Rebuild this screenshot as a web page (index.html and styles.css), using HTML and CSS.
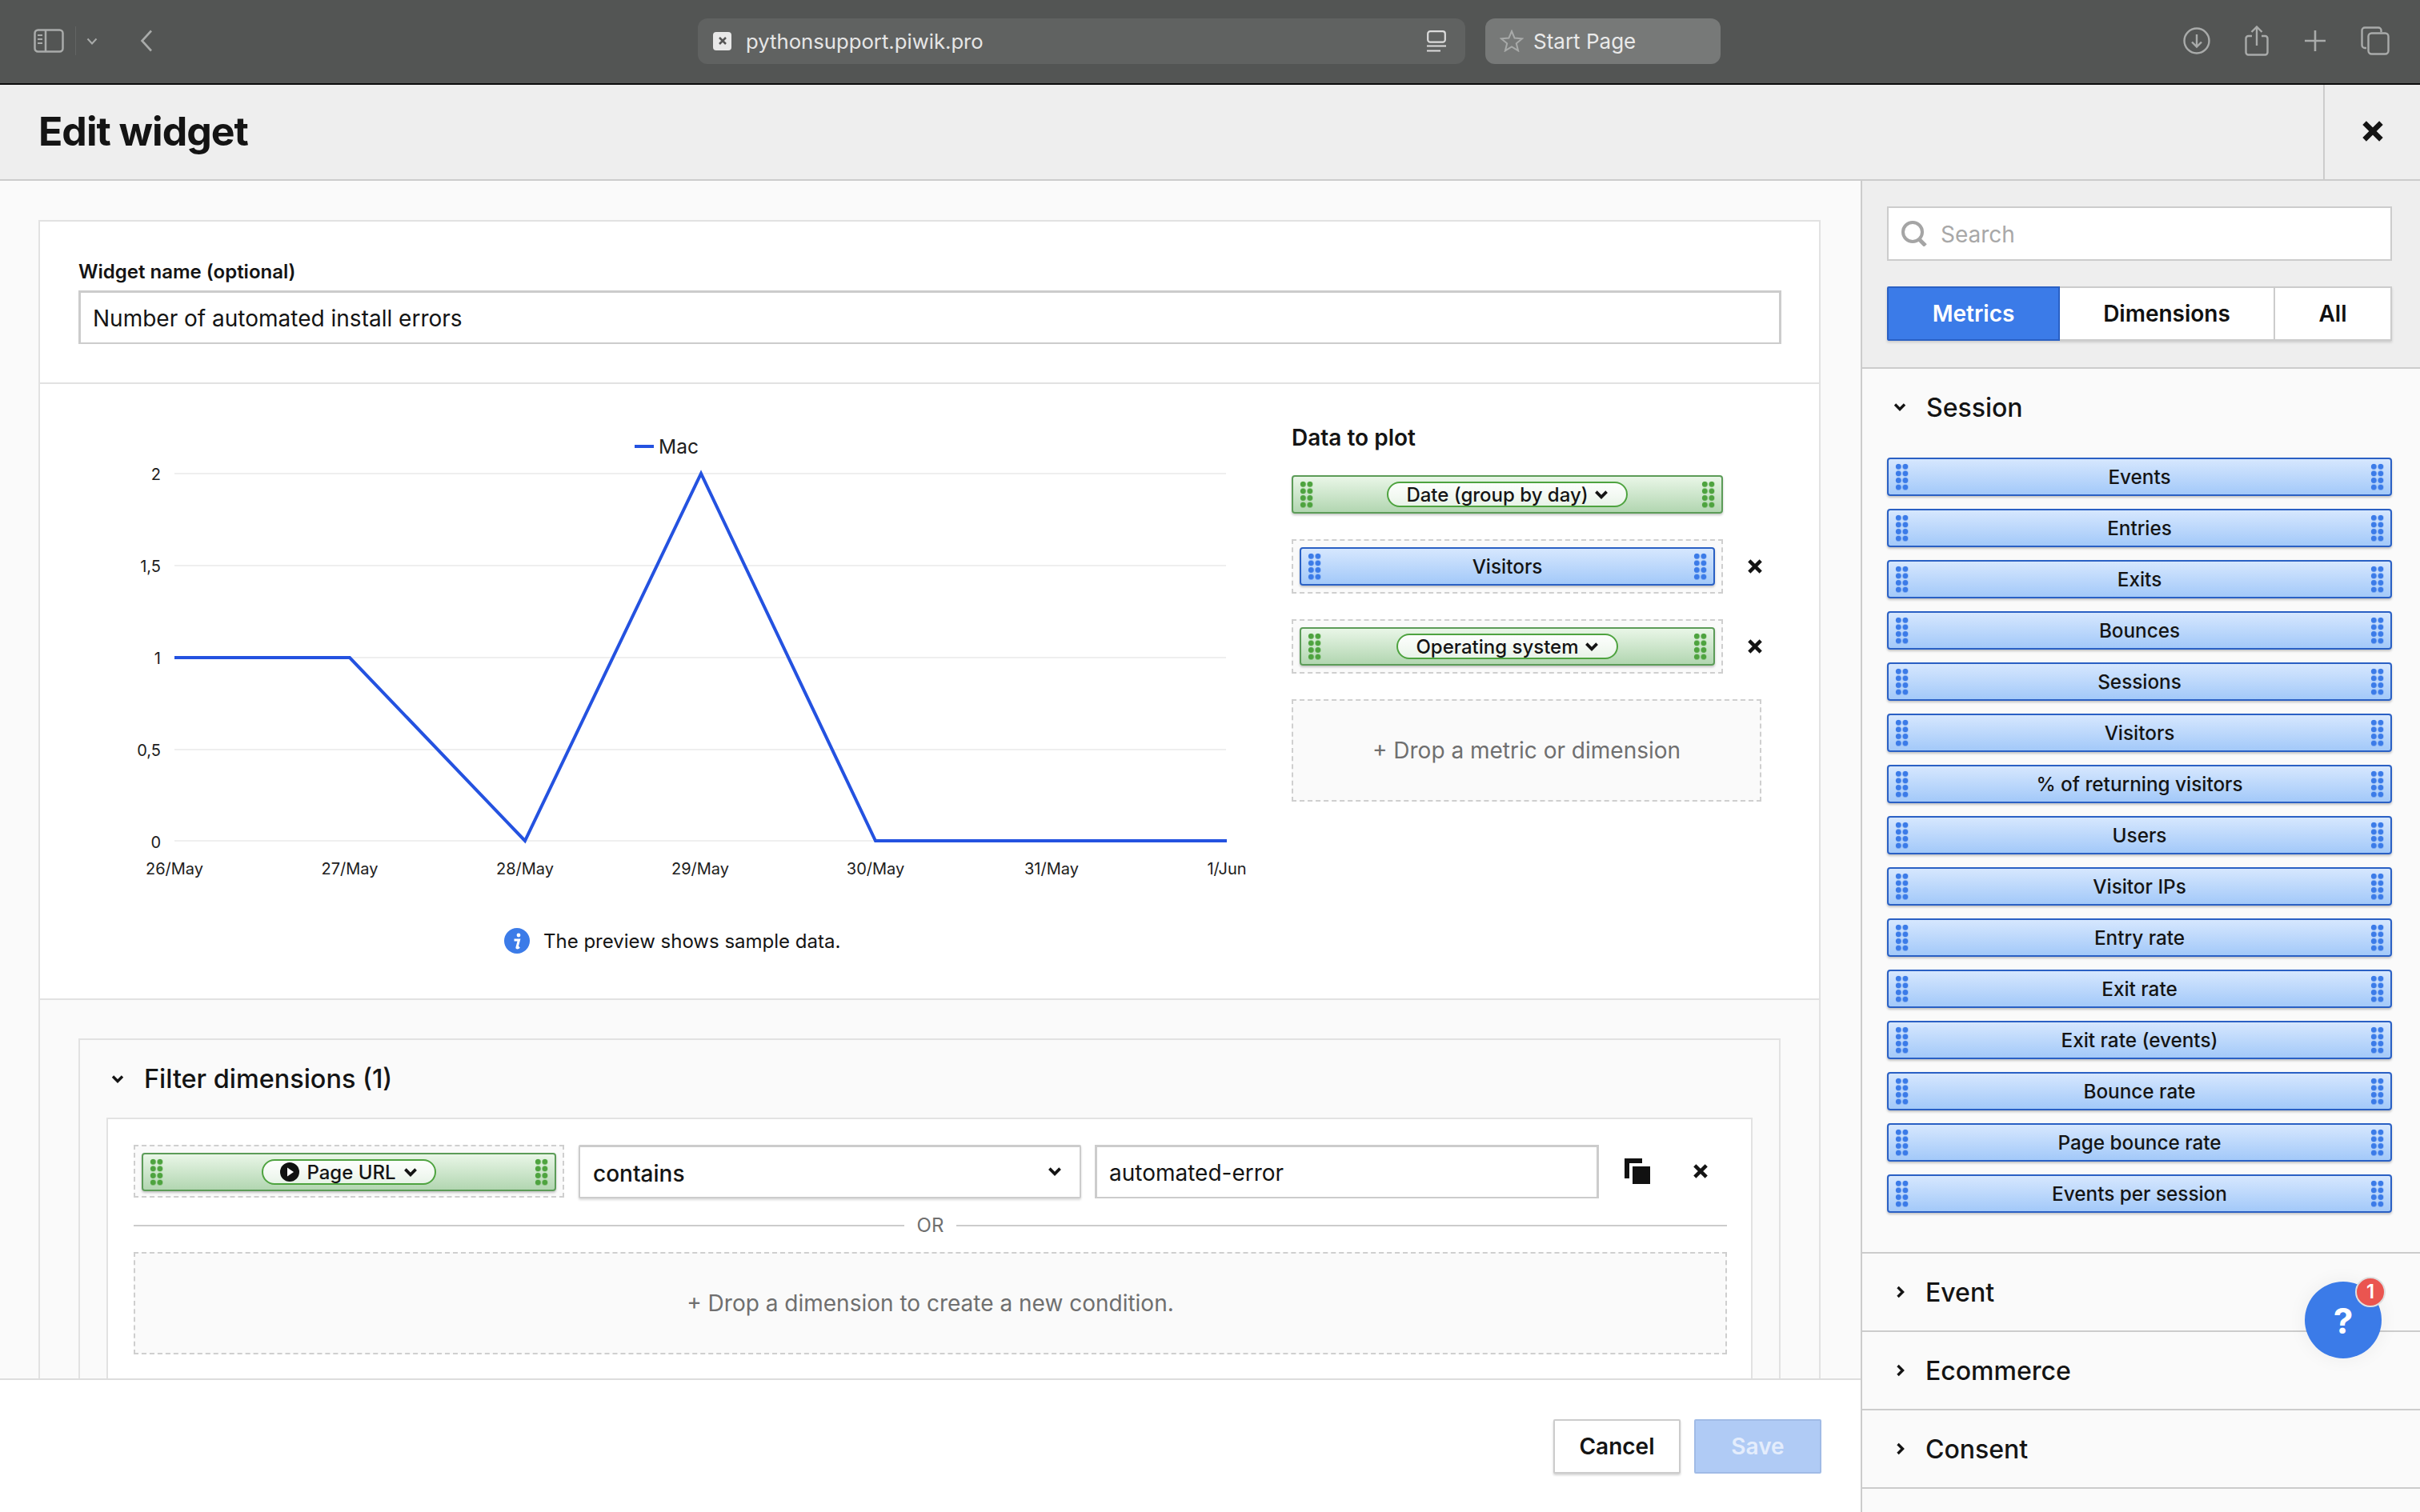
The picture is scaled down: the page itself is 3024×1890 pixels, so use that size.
FILE: index.html
```html
<!DOCTYPE html>
<html lang="en">
<head>
<meta charset="UTF-8">
<title>Edit widget</title>
<link rel="stylesheet" href="styles.css">
</head>
<body>
<svg class="defs" width="0" height="0">
  <symbol id="i-x" viewBox="0 0 20 20"><path d="M2 2 18 18M18 2 2 18" fill="none" stroke="currentColor" stroke-width="5"/></symbol>
  <symbol id="i-down" viewBox="0 0 16 10"><path d="M2 1.500 8 7.500 14 1.500" fill="none" stroke="currentColor" stroke-width="3.400"/></symbol>
  <symbol id="i-right" viewBox="0 0 10 16"><path d="M1.500 2 7.500 8 1.500 14" fill="none" stroke="currentColor" stroke-width="3.400"/></symbol>
</svg>

<div class="browser-bar">
  <svg class="tb-sidebar" width="38" height="30" viewBox="0 0 38 30" fill="none" stroke="#a9abaa" stroke-width="2.5">
    <rect x="1.5" y="1.5" width="35" height="27" rx="4"/><path d="M15 1.5v27"/>
    <path d="M5 8h6M5 13h6M5 18h6" stroke-width="2"/>
  </svg>
  <span class="tb-divider"></span>
  <svg class="tb-small-chevron" width="14" height="9" viewBox="0 0 14 9" fill="none" stroke="#a9abaa" stroke-width="2"><path d="M1.5 1.5 7 7.5 12.5 1.5"/></svg>
  <svg class="tb-back" width="16" height="28" viewBox="0 0 16 28" fill="none" stroke="#a9abaa" stroke-width="2.6"><path d="M14 1.5 2.5 14 14 26.5"/></svg>

  <div class="url-field">
    <span class="favicon"><svg width="10" height="10"><use href="#i-x"/></svg></span>
    <span class="url-text">pythonsupport.piwik.pro</span>
    <svg class="reader" width="24" height="27" viewBox="0 0 24 27" fill="none" stroke="#dcdcdc" stroke-width="2.2"><rect x="1.2" y="1.2" width="21.6" height="13.5" rx="3"/><path d="M0 19.5h24M0 25.5h17"/></svg>
  </div>
  <div class="start-tab">
    <svg width="30" height="28" viewBox="0 0 30 28" fill="none" stroke="#a8aaa9" stroke-width="2"><path d="M15 2l3.6 8.6 9.4.7-7.200 6 2.300 9.100L15 21.500 6.900 26.400l2.300-9.100-7.200-6 9.400-.7z"/></svg>
    <span>Start Page</span>
  </div>

  <div class="tb-right">
    <svg width="34" height="34" viewBox="0 0 34 34" fill="none" stroke="#a9abaa" stroke-width="2.400"><circle cx="17" cy="17" r="15.500"/><path d="M17 9v15M11 18.500 17 24.500 23 18.500"/></svg>
    <svg width="30" height="38" viewBox="0 0 30 38" fill="none" stroke="#a9abaa" stroke-width="2.400"><path d="M9 13H4.500A3 3 0 0 0 1.500 16v17.500a3 3 0 0 0 3 3h21a3 3 0 0 0 3-3V16a3 3 0 0 0-3-3H21M15 25V2M8.500 8 15 1.500 21.500 8"/></svg>
    <svg width="28" height="28" viewBox="0 0 28 28" fill="none" stroke="#a9abaa" stroke-width="2.600"><path d="M14 1v26M1 14h26"/></svg>
    <svg width="36" height="36" viewBox="0 0 36 36" fill="none" stroke="#a9abaa" stroke-width="2.400"><path d="M7 27H5a3.500 3.500 0 0 1-3.500-3.500V5A3.500 3.500 0 0 1 5 1.500h17A3.500 3.500 0 0 1 25.500 5v2"/><rect x="9.500" y="8.500" width="25" height="26" rx="4"/></svg>
  </div>
</div>

<header class="modal-head">
  <h1>Edit widget</h1>
  <button class="modal-close"><svg width="26" height="26"><use href="#i-x"/></svg></button>
</header>

<div class="modal-body">
  <main class="editor">
    <div class="editor-scroll">
      <div class="card">
        <section class="name-section">
          <label class="field-label">Widget name (optional)</label>
          <div class="text-field">Number of automated install errors</div>
        </section>

        <section class="preview-section">
          <div class="chart-col">
            <svg class="chart" width="1564" height="660" viewBox="50 480 1564 660">
              <g class="grid">
                <path d="M218 592H1532M218 707H1532M218 822H1532M218 937H1532M218 1051H1532"/>
              </g>
              <g class="ticks-y">
                <text x="201" y="600">2</text>
                <text x="201" y="715">1,5</text>
                <text x="201" y="830">1</text>
                <text x="201" y="945">0,5</text>
                <text x="201" y="1060">0</text>
              </g>
              <g class="ticks-x">
                <text x="218" y="1093">26/May</text>
                <text x="437" y="1093">27/May</text>
                <text x="656" y="1093">28/May</text>
                <text x="875" y="1093">29/May</text>
                <text x="1094" y="1093">30/May</text>
                <text x="1314" y="1093">31/May</text>
                <text x="1533" y="1093">1/Jun</text>
              </g>
              <polyline class="series" points="218,822 437,822 656,1051 876,592 1094,1051 1313,1051 1533,1051"/>
              <path class="series" d="M793 558H817"/>
              <text class="legend" x="823" y="567">Mac</text>
            </svg>
            <div class="sample-note">
              <svg width="32" height="32" viewBox="0 0 32 32"><circle cx="16" cy="16" r="16" fill="#3b7be8"/><circle cx="18" cy="9" r="2.400" fill="#fff"/><path d="M12.500 15h6l-2.600 9.500c0 .8 1.600.4 3-.8" fill="none" stroke="#fff" stroke-width="3"/></svg>
              <span>The preview shows sample data.</span>
            </div>
          </div>

          <div class="plot-col">
            <h3>Data to plot</h3>
            <div class="plot-row">
              <div class="chip chip-green chip-wide">
                <i class="grip"></i><span class="pill">Date (group by day) <svg width="18" height="11"><use href="#i-down"/></svg></span><i class="grip"></i>
              </div>
            </div>
            <div class="plot-row">
              <div class="slot">
                <div class="chip chip-blue"><i class="grip"></i><span>Visitors</span><i class="grip"></i></div>
              </div>
              <svg class="row-x" width="20" height="18"><use href="#i-x"/></svg>
            </div>
            <div class="plot-row">
              <div class="slot">
                <div class="chip chip-green">
                  <i class="grip"></i><span class="pill">Operating system <svg width="18" height="11"><use href="#i-down"/></svg></span><i class="grip"></i>
                </div>
              </div>
              <svg class="row-x" width="20" height="18"><use href="#i-x"/></svg>
            </div>
            <div class="drop-box plot-drop">+ Drop a metric or dimension</div>
          </div>
        </section>

        <section class="filter-section">
          <div class="filter-panel">
            <div class="filter-head">
              <svg width="16" height="10"><use href="#i-down"/></svg>
              <span>Filter dimensions (1)</span>
            </div>
            <div class="filter-box">
              <div class="filter-row">
                <div class="slot filter-slot">
                  <div class="chip chip-green">
                    <i class="grip"></i>
                    <span class="pill pill-url">
                      <svg width="24" height="24" viewBox="0 0 24 24"><circle cx="12" cy="12" r="12" fill="#111"/><path d="M9 6.500 17 12 9 17.500z" fill="#fff"/></svg>
                      Page URL <svg width="18" height="11"><use href="#i-down"/></svg>
                    </span>
                    <i class="grip"></i>
                  </div>
                </div>
                <div class="select-field"><span>contains</span><svg width="18" height="11"><use href="#i-down"/></svg></div>
                <div class="text-field value-field">automated-error</div>
                <svg class="copy-icon" width="32" height="32" viewBox="0 0 32 32"><path d="M0 0H22V6H6V25H0z" fill="#111"/><rect x="10" y="10" width="22" height="22" fill="#111"/></svg>
                <svg class="filter-x" width="20" height="18"><use href="#i-x"/></svg>
              </div>
              <div class="or-line"><span>OR</span></div>
              <div class="drop-box filter-drop">+ Drop a dimension to create a new condition.</div>
            </div>
          </div>
        </section>
      </div>
    </div>
    <footer class="editor-foot">
      <button class="btn btn-cancel">Cancel</button>
      <button class="btn btn-save">Save</button>
    </footer>
  </main>

  <aside class="palette">
    <div class="palette-top">
      <div class="search-field">
        <svg width="34" height="32" viewBox="0 0 34 32" fill="none" stroke="#a5a5a5" stroke-width="4"><circle cx="15" cy="14" r="12"/><path d="M23 23l8 8" stroke-width="5"/></svg>
        <span>Search</span>
      </div>
      <div class="tabs">
        <button class="tab tab-active tab-metrics">Metrics</button>
        <button class="tab tab-dims">Dimensions</button>
        <button class="tab tab-all">All</button>
      </div>
    </div>

    <div class="group group-open">
      <div class="group-head"><svg width="16" height="10"><use href="#i-down"/></svg><span>Session</span></div>
      <div class="chip-list">
        <div class="chip chip-blue"><i class="grip"></i><span>Events</span><i class="grip"></i></div>
        <div class="chip chip-blue"><i class="grip"></i><span>Entries</span><i class="grip"></i></div>
        <div class="chip chip-blue"><i class="grip"></i><span>Exits</span><i class="grip"></i></div>
        <div class="chip chip-blue"><i class="grip"></i><span>Bounces</span><i class="grip"></i></div>
        <div class="chip chip-blue"><i class="grip"></i><span>Sessions</span><i class="grip"></i></div>
        <div class="chip chip-blue"><i class="grip"></i><span>Visitors</span><i class="grip"></i></div>
        <div class="chip chip-blue"><i class="grip"></i><span>% of returning visitors</span><i class="grip"></i></div>
        <div class="chip chip-blue"><i class="grip"></i><span>Users</span><i class="grip"></i></div>
        <div class="chip chip-blue"><i class="grip"></i><span>Visitor IPs</span><i class="grip"></i></div>
        <div class="chip chip-blue"><i class="grip"></i><span>Entry rate</span><i class="grip"></i></div>
        <div class="chip chip-blue"><i class="grip"></i><span>Exit rate</span><i class="grip"></i></div>
        <div class="chip chip-blue"><i class="grip"></i><span>Exit rate (events)</span><i class="grip"></i></div>
        <div class="chip chip-blue"><i class="grip"></i><span>Bounce rate</span><i class="grip"></i></div>
        <div class="chip chip-blue"><i class="grip"></i><span>Page bounce rate</span><i class="grip"></i></div>
        <div class="chip chip-blue"><i class="grip"></i><span>Events per session</span><i class="grip"></i></div>
      </div>
    </div>
    <div class="group"><div class="group-head"><svg width="10" height="16"><use href="#i-right"/></svg><span>Event</span></div></div>
    <div class="group"><div class="group-head"><svg width="10" height="16"><use href="#i-right"/></svg><span>Ecommerce</span></div></div>
    <div class="group"><div class="group-head"><svg width="10" height="16"><use href="#i-right"/></svg><span>Consent</span></div></div>
  </aside>
</div>

<div class="help-bubble">?<span class="help-badge">1</span></div>
</body>
</html>
```

FILE: styles.css
```css
* {
  box-sizing: border-box;
}
html, body {
  margin: 0;
  width: 3024px;
  height: 1890px;
  overflow: hidden;
}
body {
  position: relative;
  font-family: Inter, "Liberation Sans", sans-serif;
  color: #141414;
  background: #fafafa;
}
.defs {
  position: absolute;
}
button {
  font-family: inherit;
}

/* browser chrome */
.browser-bar {
  display: flex;
  align-items: center;
  height: 106px;
  padding: 0 38px 2px 42px;
  background: #535554;
  border-bottom: 2px solid #0c0c0c;
}
.tb-divider {
  width: 1px;
  height: 36px;
  margin-left: 14px;
  background: #626463;
}
.tb-small-chevron {
  margin-left: 13px;
}
.tb-back {
  margin-left: 53px;
}
.url-field {
  display: flex;
  align-items: center;
  width: 959px;
  height: 57px;
  margin-left: 681px;
  padding: 0 24px 0 19px;
  background: #606261;
  border-radius: 12px;
}
.favicon {
  display: flex;
  align-items: center;
  justify-content: center;
  width: 23px;
  height: 23px;
  border-radius: 4px;
  background: #e8e8e8;
  color: #555;
}
.url-text {
  margin-left: 18px;
  font-size: 25.7px;
  color: #e6e6e6;
}
.reader {
  margin-left: auto;
}
.start-tab {
  display: flex;
  align-items: center;
  width: 294px;
  height: 57px;
  margin-left: 25px;
  padding-left: 18px;
  background: #777978;
  border-radius: 12px;
  font-size: 26px;
  color: #eaeaea;
}
.start-tab span {
  margin-left: 12px;
}
.tb-right {
  display: flex;
  align-items: center;
  gap: 43.5px;
  margin-left: auto;
}

/* modal header */
.modal-head {
  display: flex;
  align-items: stretch;
  justify-content: space-between;
  height: 120px;
  padding-left: 48px;
  background: #eeeeee;
  border-bottom: 2px solid #cccccc;
}
.modal-head h1 {
  margin: 0 0 3px;
  align-self: center;
  font-size: 50px;
  font-weight: 700;
  letter-spacing: -1px;
}
.modal-close {
  width: 121px;
  padding: 0;
  background: none;
  border: 0;
  border-left: 2px solid #cccccc;
  color: #141414;
}

.modal-body {
  display: flex;
  height: 1664px;
}

/* editor column */
.editor {
  display: flex;
  flex-direction: column;
  width: 2325px;
}
.editor-scroll {
  height: 1499px;
  padding: 49px 0 0 48px;
  overflow: hidden;
  border-bottom: 2px solid #dddddd;
}
.card {
  width: 2227px;
  border: 2px solid #e2e2e2;
  border-bottom: 0;
}
.name-section {
  height: 203px;
  padding: 51px 47px 0 48px;
  background: #fff;
  border-bottom: 2px solid #e2e2e2;
}
.field-label {
  display: block;
  height: 35px;
  font-size: 24px;
  font-weight: 600;
  line-height: 24px;
}
.text-field {
  display: flex;
  align-items: center;
  height: 67px;
  padding: 2px 15px 0;
  background: #fff;
  border: 3px solid #cccccc;
  border-bottom-width: 2px;
  font-size: 28px;
}

.preview-section {
  display: flex;
  height: 770px;
  background: #fff;
  border-bottom: 2px solid #e2e2e2;
}
.chart-col {
  width: 1564px;
}
.chart {
  display: block;
}
.grid path {
  stroke: #efefef;
  stroke-width: 2;
  fill: none;
}
.series {
  fill: none;
  stroke: #2452e0;
  stroke-width: 4;
}
.chart text {
  font-size: 20px;
  fill: #202020;
}
.ticks-y text {
  text-anchor: end;
}
.ticks-x text {
  text-anchor: middle;
}
.chart .legend {
  font-size: 24.5px;
}
.sample-note {
  display: flex;
  align-items: center;
  gap: 17px;
  height: 72px;
  margin-left: 580px;
  font-size: 24px;
}
.plot-col {
  width: 590px;
  padding-top: 47px;
}
.plot-col h3 {
  margin: 0 0 27px;
  height: 40px;
  font-size: 28px;
  font-weight: 600;
  line-height: 40px;
}
.plot-row {
  display: flex;
  align-items: center;
  width: 590px;
  margin-bottom: 32px;
}
.plot-row .slot {
  width: 539px;
}
.chip-wide {
  width: 539px;
}
.row-x {
  margin-left: 30px;
}
.plot-drop {
  width: 587px;
  height: 128px;
}

/* chips */
.chip {
  display: flex;
  align-items: center;
  justify-content: space-between;
  height: 48px;
  padding: 0 8px;
  border: 2px solid;
  border-radius: 4px;
  box-shadow: 0 2px 3px rgba(0, 0, 0, 0.22);
  font-size: 24.3px;
  font-weight: 500;
}
.chip-blue {
  border-color: #2a60c4;
  background: linear-gradient(#d6e7fe, #a3c9f9);
}
.chip-green {
  border-color: #5c9c58;
  background: linear-gradient(#e9f6e7, #b2d6b1);
}
.grip {
  display: block;
  width: 17.2px;
  height: 34.4px;
  background-size: 8.6px 8.6px;
}
.chip-blue .grip {
  background-image: radial-gradient(circle, #3b7be8 3.2px, transparent 3.9px);
}
.chip-green .grip {
  background-image: radial-gradient(circle, #4ea33f 3.2px, transparent 3.9px);
}
.pill {
  display: flex;
  align-items: center;
  gap: 7px;
  height: 32px;
  padding: 0 22px;
  background: linear-gradient(rgba(255, 255, 255, 0.9), rgba(255, 255, 255, 0.65));
  border: 2px solid #4ea33f;
  border-radius: 16px;
  font-size: 24px;
}
.pill-url {
  gap: 9px;
  padding: 0 21px;
}
.slot {
  padding: 8px;
  background: #fafafa;
  border: 2px dashed #cfcfcf;
}
.drop-box {
  display: flex;
  align-items: center;
  justify-content: center;
  background: #fafafa;
  border: 2px dashed #cfcfcf;
  color: #6f6f6f;
  font-size: 28px;
}

/* filter */
.filter-section {
  height: 480px;
  padding: 48px 48px 0 48px;
  background: #fafafa;
}
.filter-panel {
  width: 2127px;
  height: 440px;
  padding: 0 33px;
  border: 2px solid #e2e2e2;
}
.filter-head {
  display: flex;
  align-items: center;
  gap: 25px;
  height: 97px;
  padding: 0 0 0 6px;
  font-size: 32.4px;
  font-weight: 500;
}
.filter-box {
  height: 340px;
  padding: 31px 30px 0 32px;
  background: #fff;
  border: 2px solid #e2e2e2;
}
.filter-row {
  display: flex;
  align-items: center;
  height: 68px;
}
.filter-slot {
  width: 538px;
  height: 66px;
}
.select-field {
  display: flex;
  align-items: center;
  justify-content: space-between;
  width: 628px;
  height: 67px;
  margin-left: 18px;
  padding: 4px 22px 0 16px;
  background: #fff;
  border: 2px solid #cccccc;
  border-top-width: 3px;
  border-radius: 2px;
  box-shadow: 0 2px 3px rgba(0, 0, 0, 0.15);
  font-size: 28px;
  font-weight: 500;
}
.select-field svg {
  margin-top: -4px;
}
.value-field {
  width: 630px;
  margin-left: 17px;
}
.copy-icon {
  margin-left: 32px;
}
.filter-x {
  margin-left: 53px;
}
.or-line {
  display: flex;
  align-items: center;
  gap: 16px;
  height: 67px;
  font-size: 24px;
  color: #6f6f6f;
}
.or-line::before, .or-line::after {
  content: "";
  flex: 1;
  height: 2px;
  background: #cccccc;
}
.filter-drop {
  height: 128px;
}

/* footer */
.editor-foot {
  display: flex;
  justify-content: flex-end;
  gap: 17px;
  height: 165px;
  padding: 49px 49px 0 0;
  background: #fff;
}
.btn {
  width: 159px;
  height: 68px;
  padding: 0;
  font-size: 28px;
  font-weight: 600;
  border-radius: 2px;
}
.btn-cancel {
  background: #fff;
  color: #141414;
  border: 2px solid #cccccc;
  box-shadow: 0 2px 3px rgba(0, 0, 0, 0.18);
}
.btn-save {
  background: #b0cbf5;
  color: #e4edfc;
  border: 2px solid #a0bbe6;
}

/* palette */
.palette {
  width: 699px;
  border-left: 2px solid #cccccc;
  background: #fafafa;
}
.palette-top {
  height: 235px;
  padding: 32px 35px 0 31px;
  background: #eeeeee;
  border-bottom: 2px solid #cccccc;
}
.search-field {
  display: flex;
  align-items: center;
  gap: 16px;
  height: 68px;
  padding-left: 15px;
  background: #fff;
  border: 2px solid #cccccc;
  color: #a8a8a8;
  font-size: 28px;
}
.search-field span {
  padding-top: 2px;
}
.tabs {
  display: flex;
  height: 68px;
  margin-top: 32px;
  box-shadow: 0 2px 3px rgba(0, 0, 0, 0.15);
}
.tab {
  padding: 0;
  background: #fff;
  border: 2px solid #cccccc;
  border-left-width: 0;
  color: #111;
  font-size: 28px;
  font-weight: 600;
}
.tab-active {
  background: #3b7be8;
  border: 2px solid #2a60c4;
  border-radius: 2px 0 0 2px;
  color: #fff;
}
.tab-metrics {
  width: 216px;
}
.tab-dims {
  width: 269px;
}
.tab-all {
  width: 146px;
}
.group {
  border-bottom: 2px solid #cccccc;
}
.group-head {
  display: flex;
  align-items: center;
  gap: 26px;
  height: 96px;
  padding-left: 43px;
  font-size: 32px;
  font-weight: 500;
}
.group-head svg {
  color: #141414;
}
.group-open .group-head {
  gap: 25px;
  padding-left: 39px;
}
.chip-list {
  display: flex;
  flex-direction: column;
  gap: 16px;
  padding: 15px 35px 49px 31px;
}

/* help */
.help-bubble {
  position: absolute;
  left: 2880px;
  top: 1602px;
  width: 96px;
  height: 96px;
  border-radius: 50%;
  background: #3b7be8;
  box-shadow: 0 0 24px rgba(0, 0, 0, 0.06);
  color: #fff;
  font-size: 44px;
  font-weight: 700;
  line-height: 98px;
  text-align: center;
}
.help-badge {
  position: absolute;
  left: 63px;
  top: -6px;
  width: 38px;
  height: 38px;
  border: 2px solid #dfdfdf;
  border-radius: 50%;
  background: #ea5550;
  font-size: 24px;
  font-weight: 600;
  line-height: 34px;
}
```
